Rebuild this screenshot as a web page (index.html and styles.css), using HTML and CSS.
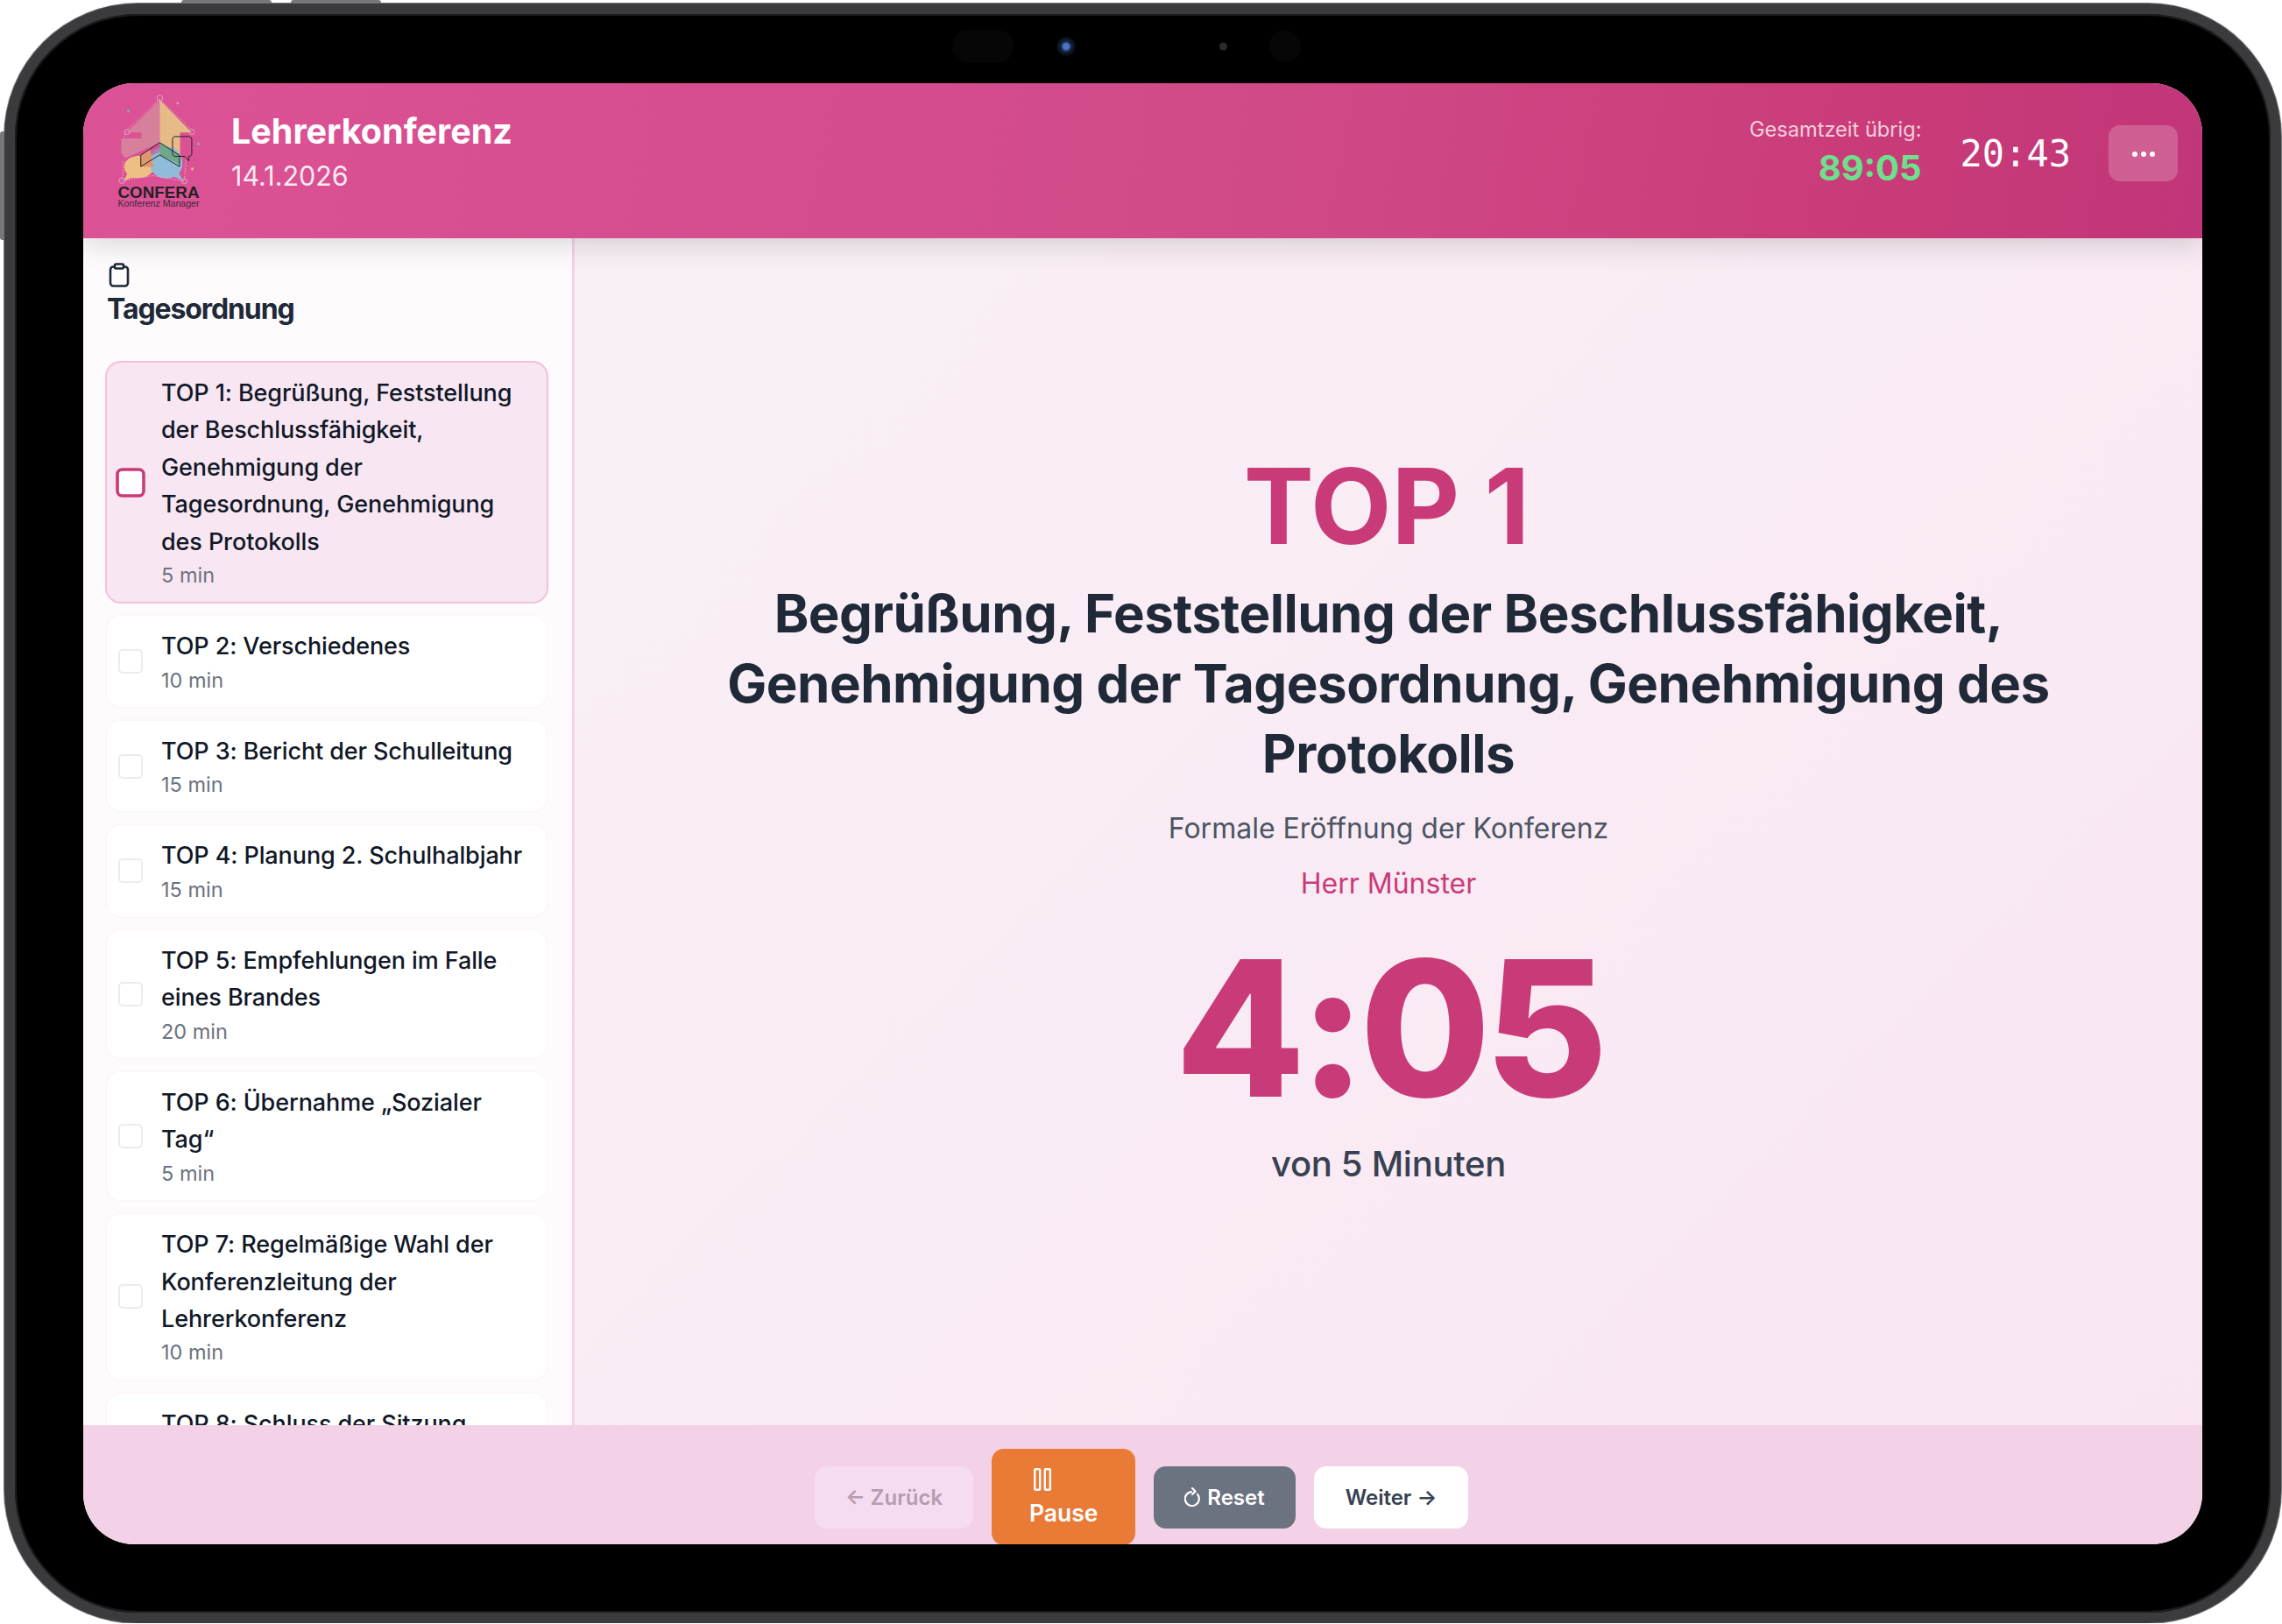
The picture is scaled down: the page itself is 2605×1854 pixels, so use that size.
FILE: index.html
```html
<!DOCTYPE html>
<html lang="de">
<head>
    <meta charset="UTF-8">
    <title>Confera</title>
    <link rel="stylesheet" href="styles.css">
</head>
<body>
    <div class="device">
        <span class="hw-btn hw-top-a"></span>
        <span class="hw-btn hw-top-b"></span>
        <span class="hw-btn hw-side"></span>
        <div class="sensors">
            <span class="sensor-pill"></span>
            <span class="sensor-cam"></span>
            <span class="sensor-dot"></span>
            <span class="sensor-round"></span>
        </div>
        <div class="screen">
            <header class="topbar">
                <div class="brand">
                    <svg class="logo" viewBox="100 50 300 400">
                        <polygon points="248,68 135,180 185,180 185,200 116,200 116,250 130,268 248,215" fill="#d6809c"/>
                        <polygon points="248,68 358,180 318,180 318,270 248,215" fill="#e7bb88"/>
                        <path d="M180 260c30 0 48 18 48 38s-22 38-52 38c-10 0-20-1-26 0l-24 10 10-24c-6-8-10-16-10-24 0-22 24-38 54-38z" fill="#edbf85"/>
                        <path d="M270 228c32 0 56 24 56 58 0 14-4 26-12 34l14 26-30-14c-8 3-18 5-28 5-34 0-56-22-56-50 0-34 26-59 56-59z" fill="#90bcd9"/>
                        <polygon points="248,215 316,258 316,270 318,290 248,257" fill="#6da889"/>
                        <path d="M248 232c-16 4-28 16-33 30l33-15z" fill="#a782b0"/>
                        <polygon points="183,258 215,238 228,298 183,297" fill="#e0976f"/>
                        <polyline points="248,65 135,172 122,200" fill="none" stroke="#efc4d2" stroke-width="3" stroke-dasharray="3 6"/>
                        <polyline points="248,65 358,172" fill="none" stroke="#f3d4ae" stroke-width="3" stroke-dasharray="3 6"/>
                        <polyline points="122,280 122,330 118,345 225,328 333,347 338,270" fill="none" stroke="#f3d4dd" stroke-width="3" stroke-dasharray="3 6"/>
                        <polygon points="183,258 248,215 316,258 316,297 248,257 183,297" fill="none" stroke="#222" stroke-width="3"/>
                        <path d="M302 194h46c6 0 10 4 10 10v48c0 6-4 10-10 10v16l-14-16h-32c-6 0-10-4-10-10v-48c0-6 4-10 10-10z" fill="none" stroke="#222" stroke-width="3"/>
                        <g fill="none" stroke="#d9a3c4" stroke-width="3">
                            <circle cx="248" cy="62" r="10"/>
                            <circle cx="136" cy="178" r="9"/>
                            <circle cx="358" cy="178" r="9"/>
                            <circle cx="119" cy="345" r="10"/>
                            <circle cx="333" cy="347" r="9"/>
                        </g>
                        <circle cx="141" cy="107" r="5" fill="#7fae9f"/>
                        <circle cx="310" cy="79" r="5" fill="#e58bb0"/>
                        <circle cx="381" cy="219" r="5" fill="#7fae9f"/>
                        <circle cx="360" cy="305" r="5" fill="#e7bb6a"/>
                        <text class="logo-name" x="104" y="405" textLength="280" lengthAdjust="spacingAndGlyphs">CONFERA</text>
                        <text class="logo-sub" x="104" y="434" textLength="280" lengthAdjust="spacingAndGlyphs">Konferenz Manager</text>
                    </svg>
                    <div>
                        <h1 class="conf-title">Lehrerkonferenz</h1>
                        <p class="conf-date">14.1.2026</p>
                    </div>
                </div>
                <div class="status">
                    <div class="remaining">
                        <div class="remaining-label">Gesamtzeit übrig:</div>
                        <div class="remaining-time">89:05</div>
                    </div>
                    <div class="clock">20:43</div>
                    <button class="menu-btn">
                        <svg viewBox="0 0 28 8" width="28" height="8" fill="#fff">
                            <circle cx="4" cy="4" r="3"/><circle cx="14" cy="4" r="3"/><circle cx="24" cy="4" r="3"/>
                        </svg>
                    </button>
                </div>
            </header>

            <div class="middle">
                <aside class="sidebar">
                    <svg class="agenda-icon" viewBox="0 0 24 28" width="24" height="28" fill="none" stroke="#1f2937" stroke-width="2.6">
                        <rect x="2" y="4.5" width="20" height="22" rx="3.5"/>
                        <rect x="7" y="1.5" width="10" height="5" rx="1.5" fill="#fff"/>
                    </svg>
                    <h2 class="agenda-title">Tagesordnung</h2>
                    <div class="agenda">
                        <div class="item active">
                            <span class="check"></span>
                            <div>
                                <div class="item-name">TOP 1: Begrüßung, Feststellung der Beschlussfähigkeit, Genehmigung der Tagesordnung, Genehmigung des Protokolls</div>
                                <div class="item-min">5 min</div>
                            </div>
                        </div>
                        <div class="item">
                            <span class="check"></span>
                            <div>
                                <div class="item-name">TOP 2: Verschiedenes</div>
                                <div class="item-min">10 min</div>
                            </div>
                        </div>
                        <div class="item">
                            <span class="check"></span>
                            <div>
                                <div class="item-name">TOP 3: Bericht der Schulleitung</div>
                                <div class="item-min">15 min</div>
                            </div>
                        </div>
                        <div class="item">
                            <span class="check"></span>
                            <div>
                                <div class="item-name">TOP 4: Planung 2. Schulhalbjahr</div>
                                <div class="item-min">15 min</div>
                            </div>
                        </div>
                        <div class="item">
                            <span class="check"></span>
                            <div>
                                <div class="item-name">TOP 5: Empfehlungen im Falle eines Brandes</div>
                                <div class="item-min">20 min</div>
                            </div>
                        </div>
                        <div class="item">
                            <span class="check"></span>
                            <div>
                                <div class="item-name">TOP 6: Übernahme „Sozialer Tag“</div>
                                <div class="item-min">5 min</div>
                            </div>
                        </div>
                        <div class="item">
                            <span class="check"></span>
                            <div>
                                <div class="item-name">TOP 7: Regelmäßige Wahl der Konferenzleitung der Lehrerkonferenz</div>
                                <div class="item-min">10 min</div>
                            </div>
                        </div>
                        <div class="item">
                            <span class="check"></span>
                            <div>
                                <div class="item-name">TOP 8: Schluss der Sitzung</div>
                                <div class="item-min">5 min</div>
                            </div>
                        </div>
                    </div>
                </aside>

                <main class="stage">
                    <div class="stage-top">TOP 1</div>
                    <h2 class="stage-title">Begrüßung, Feststellung der Beschlussfähigkeit, Genehmigung der Tagesordnung, Genehmigung des Protokolls</h2>
                    <p class="stage-desc">Formale Eröffnung der Konferenz</p>
                    <p class="stage-person">Herr Münster</p>
                    <div class="stage-timer">4:05</div>
                    <p class="stage-of">von 5 Minuten</p>
                </main>
            </div>

            <footer class="controls">
                <button class="btn btn-back">← Zurück</button>
                <button class="btn btn-pause">
                    <svg viewBox="0 0 20 26" width="20" height="26" fill="none" stroke="#fff" stroke-width="2.4">
                        <rect x="1.2" y="1.2" width="6" height="23.6" rx="1"/>
                        <rect x="12.8" y="1.2" width="6" height="23.6" rx="1"/>
                    </svg>
                    <span>Pause</span>
                </button>
                <button class="btn btn-reset">
                    <svg viewBox="0 0 18 22" width="18" height="22" fill="none" stroke="#fff" stroke-width="2.2" stroke-linecap="round" stroke-linejoin="round">
                        <path d="M8 5.1A8 8 0 1 0 15 8"/>
                        <path d="M9 1l3.6 3.6L9 8"/>
                    </svg>
                    Reset
                </button>
                <button class="btn btn-next">Weiter →</button>
            </footer>
        </div>
    </div>
</body>
</html>
```

FILE: styles.css
```css
* {
    box-sizing: border-box;
}
body {
    margin: 0;
    background: #fff;
    font-family: Inter, "Noto Sans", sans-serif;
    color: #1f2937;
}
.device {
    position: relative;
    width: 2599px;
    height: 1849px;
    margin: 4px 0 0 5px;
    padding: 79px 78px 67px 78px;
    background: #000;
    border: 12px solid #3b3b3e;
    border-radius: 152px;
    box-shadow: inset 0 0 0 2px #1c1c1e, 0 0 0 1px #7d7d80;
}
.hw-btn {
    position: absolute;
    background: #77777a;
}
.hw-top-a {
    left: 190px;
    top: -16px;
    width: 103px;
    height: 4px;
    border-radius: 3px 3px 0 0;
}
.hw-top-b {
    left: 315px;
    top: -16px;
    width: 103px;
    height: 4px;
    border-radius: 3px 3px 0 0;
}
.hw-side {
    left: -17px;
    top: 134px;
    width: 5px;
    height: 124px;
    border-radius: 3px 0 0 3px;
}
.sensors {
    position: absolute;
    left: 0;
    right: 0;
    top: 0;
}
.sensors span {
    position: absolute;
    top: 37px;
    transform: translateY(-50%);
    background: #060606;
}
.sensor-pill {
    left: 1070px;
    width: 70px;
    height: 37px;
    border-radius: 18px;
}
.sensor-cam {
    left: 1189px;
    width: 22px;
    height: 22px;
    border-radius: 50%;
    background: radial-gradient(circle, #4d74c9 0 3px, #14233f 6px, #07080d 11px) !important;
}
.sensor-dot {
    left: 1375px;
    width: 9px;
    height: 9px;
    border-radius: 50%;
    background: #2b2b2b !important;
}
.sensor-round {
    left: 1432px;
    width: 36px;
    height: 36px;
    border-radius: 50%;
}
.screen {
    width: 2419px;
    height: 1668px;
    border-radius: 58px;
    overflow: hidden;
    display: flex;
    flex-direction: column;
    background: #fff;
}

/* top bar */
.topbar {
    position: relative;
    z-index: 2;
    flex: 0 0 177px;
    display: flex;
    justify-content: space-between;
    align-items: center;
    padding: 0 28px 17px 38px;
    background: linear-gradient(100deg, #dc5296 0%, #d14a88 55%, #c93b78 85%, #c1367a 100%);
    box-shadow: 0 8px 30px rgba(0,0,0,0.14);
    color: #fff;
}
.brand {
    display: flex;
    align-items: center;
    gap: 31px;
}
.logo {
    width: 100px;
    height: 133px;
    margin-top: -2px;
}
.logo-name {
    font-family: "Liberation Sans", sans-serif;
    font-weight: 700;
    font-size: 56px;
    fill: #222;
}
.logo-sub {
    font-family: "Liberation Sans", sans-serif;
    font-size: 32px;
    fill: #3b2a3a;
}
.conf-title {
    margin: 0;
    font-size: 39.5px;
    font-weight: 700;
    line-height: 52px;
}
.conf-date {
    margin: 0;
    font-size: 30.5px;
    line-height: 50px;
    color: rgba(255,255,255,0.9);
}
.status {
    display: flex;
    align-items: center;
}
.remaining {
    text-align: right;
}
.remaining-label {
    margin-bottom: 2px;
    font-size: 23.6px;
    line-height: 31px;
    color: rgba(255,255,255,0.75);
}
.remaining-time {
    font-size: 40px;
    font-weight: 700;
    line-height: 54px;
    color: #6ee08c;
}
.clock {
    margin: 0 43px 0 44px;
    font-family: "DejaVu Sans Mono", monospace;
    font-size: 42px;
    color: #fff;
}
.menu-btn {
    width: 79px;
    height: 64px;
    padding: 0;
    border: 0;
    border-radius: 13px;
    background: rgba(255,255,255,0.2);
}

/* sidebar + stage */
.middle {
    flex: 1;
    min-height: 0;
    display: flex;
}
.sidebar {
    flex: 0 0 561px;
    padding: 28px 27px 0 25px;
    overflow: hidden;
    background: #fefbfd;
    border-right: 3px solid #f5d3e8;
}
.agenda-icon {
    display: block;
    margin-left: 4px;
}
.agenda-title {
    margin: 2px 0 0 2px;
    font-size: 32px;
    font-weight: 700;
    letter-spacing: -1.1px;
    line-height: 46px;
}
.agenda {
    margin-top: 36px;
    display: flex;
    flex-direction: column;
    gap: 12px;
}
.item {
    display: flex;
    align-items: center;
    gap: 21px;
    padding: 14px 16px 14px 13px;
    background: #fff;
    border: 2px solid #fdf7fb;
    border-radius: 18px;
}
.item.active {
    background: #f8e7f2;
    border-color: #f4c0dc;
}
.check {
    flex: 0 0 28px;
    height: 28px;
    background: #fff;
    border: 2px solid #ececf0;
    border-radius: 5px;
}
.active .check {
    border: 3px solid #c93b78;
    transform: scale(1.2);
    border-radius: 6px;
}
.item-name {
    font-size: 27px;
    letter-spacing: -0.1px;
    line-height: 42.4px;
    font-weight: 500;
    color: #111827;
}
.item-min {
    font-size: 23.5px;
    line-height: 33.2px;
    color: #6b7280;
}
.stage {
    flex: 1;
    display: flex;
    flex-direction: column;
    align-items: center;
    padding: 233px 120px 0;
    text-align: center;
    background: linear-gradient(135deg, #f9f0f7, #f9e6f2);
}
.stage-top {
    margin-left: -4px;
    font-size: 120px;
    font-weight: 700;
    line-height: 146px;
    color: #c93b78;
}
.stage-title {
    margin: 9px 0 0;
    font-size: 60px;
    font-weight: 700;
    letter-spacing: -0.48px;
    line-height: 80px;
    color: #1f2937;
}
.stage-desc {
    margin: 23px 0 0;
    font-size: 32px;
    line-height: 46px;
    color: #4b5563;
}
.stage-person {
    margin: 17px 0 0;
    font-size: 32px;
    line-height: 46px;
    color: #c93b78;
}
.stage-timer {
    margin-top: 12px;
    font-size: 216px;
    font-weight: 800;
    letter-spacing: -7px;
    line-height: 260px;
    color: #c93b78;
}
.stage-of {
    margin: 0;
    font-size: 40px;
    font-weight: 500;
    letter-spacing: -0.3px;
    line-height: 50px;
    color: #374151;
}

/* bottom buttons */
.controls {
    flex: 0 0 136px;
    display: flex;
    justify-content: center;
    align-items: center;
    gap: 21px;
    padding: 28px 3px 0 0;
    overflow: hidden;
    background: #f3d1e7;
}
.btn {
    height: 71px;
    padding: 0;
    border: 0;
    border-radius: 14px;
    display: flex;
    justify-content: center;
    align-items: center;
    gap: 8px;
    font-family: Inter, sans-serif;
    font-size: 24px;
    font-weight: 600;
    white-space: nowrap;
}
.btn svg {
    flex-shrink: 0;
}
.btn-back {
    width: 181px;
    background: #f6dcf0;
    color: #b79bae;
}
.btn-pause {
    width: 164px;
    height: 110px;
    padding: 22px 0 0 43px;
    flex-direction: column;
    align-items: flex-start;
    justify-content: flex-start;
    gap: 9px;
    background: #e97b37;
    color: #fff;
    font-size: 26.5px;
}
.btn-pause svg {
    margin-left: 5px;
}
.btn-reset {
    width: 162px;
    background: #6b7280;
    color: #fff;
}
.btn-next {
    width: 176px;
    background: #fff;
    color: #374151;
}
```
